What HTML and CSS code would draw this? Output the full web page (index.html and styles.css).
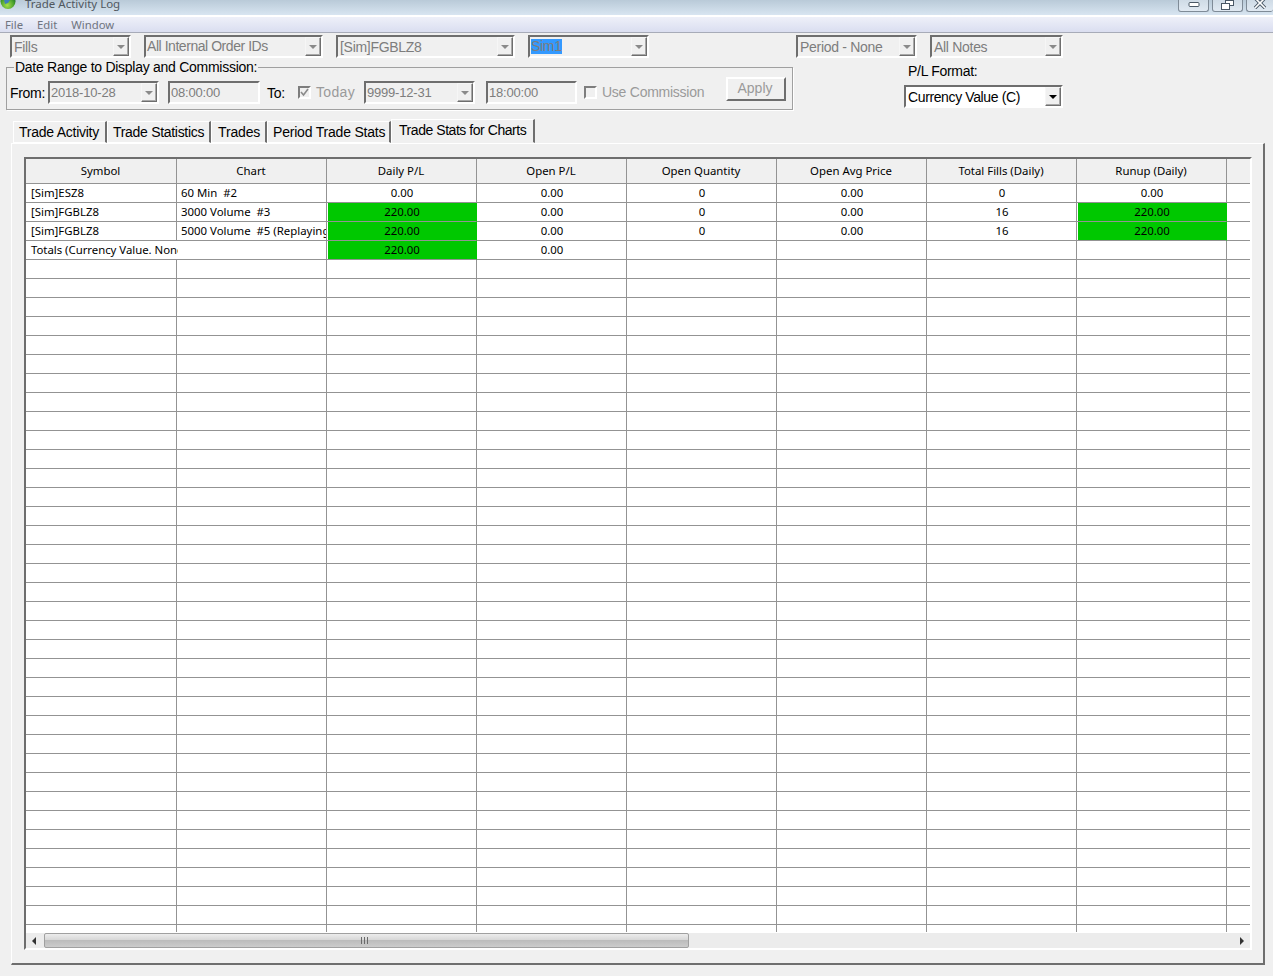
FILE: index.html
```html
<!DOCTYPE html>
<html lang="en">
<head>
<meta charset="utf-8">
<title>Trade Activity Log</title>
<link rel="stylesheet" href="styles.css">
</head>
<body>
<div class="window">
  <header class="titlebar">
    <svg class="globe" width="16" height="12" viewBox="0 0 16 12"><defs><radialGradient id="g" cx="0.45" cy="0.75" r="0.7"><stop offset="0" stop-color="#a6e04a"/><stop offset="0.7" stop-color="#3f9a2a"/><stop offset="1" stop-color="#1d5a3a"/></radialGradient></defs><circle cx="8" cy="1.5" r="7.5" fill="url(#g)"/><path d="M4 0h6l-2 3-3 1z" fill="#3f7fb8"/></svg>
    <span class="title">Trade Activity Log</span>
    <div class="winbtns">
      <div class="winbtn min"><svg width="12" height="6" viewBox="0 0 12 6"><rect x="1" y="0.5" width="10" height="4" rx="1" fill="#fff" stroke="#4a5866"/></svg></div>
      <div class="winbtn res"><svg width="13" height="10" viewBox="0 0 13 10"><rect x="4.5" y="0.5" width="8" height="5" fill="#fff" stroke="#4a5866"/><rect x="0.5" y="3.5" width="8" height="6" fill="#fff" stroke="#4a5866"/></svg></div>
      <div class="winbtn cls"><svg width="14" height="9" viewBox="0 0 14 9"><path d="M2 -2l5 5 5-5M2 8l5-5 5 5" fill="none" stroke="#4a5866" stroke-width="3.4"/><path d="M2 -2l5 5 5-5M2 8l5-5 5 5" fill="none" stroke="#fff" stroke-width="1.6"/></svg></div>
    </div>
  </header>
  <nav class="menubar"><span>File</span><span>Edit</span><span>Window</span></nav>

  <main class="client">
    <div class="toolbar">
      <div class="combo w121"><span class="val">Fills</span><span class="drop"></span></div>
      <div class="combo w179"><span class="val nudge">All Internal Order IDs</span><span class="drop"></span></div>
      <div class="combo w179"><span class="val">[Sim]FGBLZ8</span><span class="drop"></span></div>
      <div class="combo w121"><span class="val nudge"><span class="sel">Sim1</span></span><span class="drop"></span></div>
      <div class="combo w121 far"><span class="val">Period - None</span><span class="drop"></span></div>
      <div class="combo w133"><span class="val">All Notes</span><span class="drop"></span></div>
    </div>

    <div class="second">
      <div class="range">
        <span class="legend">Date Range to Display and Commission:</span>
        <span class="lbl from">From:</span>
        <div class="combo w111 date"><span class="val">2018-10-28</span><span class="drop"></span></div>
        <div class="field date"><span class="val">08:00:00</span></div>
        <span class="lbl to">To:</span>
        <span class="check"><svg width="9" height="9" viewBox="0 0 9 9"><path d="M1 4l2.5 3L8 1" fill="none" stroke="#8a8a8a" stroke-width="1.6"/></svg></span>
        <span class="dis today">Today</span>
        <div class="combo w111 date after-today"><span class="val">9999-12-31</span><span class="drop"></span></div>
        <div class="field date second-time"><span class="val">18:00:00</span></div>
        <span class="check after-time"></span>
        <span class="dis usec">Use Commission</span>
        <button class="apply" disabled>Apply</button>
      </div>
      <div class="plbox">
        <div class="pltitle">P/L Format:</div>
        <div class="combo w159 on"><span class="val">Currency Value (C)</span><span class="drop"></span></div>
      </div>
    </div>

    <div class="tabs">
      <div class="tab t1">Trade Activity</div>
      <div class="tab t2">Trade Statistics</div>
      <div class="tab t3">Trades</div>
      <div class="tab t4">Period Trade Stats</div>
      <div class="tab active">Trade Stats for Charts</div>
    </div>

    <section class="panel">
      <div class="grid">
        <div class="gridbody">
          <div class="row head">
            <div class="c">Symbol</div><div class="c">Chart</div><div class="c">Daily P/L</div><div class="c">Open P/L</div><div class="c">Open Quantity</div><div class="c">Open Avg Price</div><div class="c">Total Fills (Daily)</div><div class="c">Runup (Daily)</div><div class="c end"></div>
          </div>
          <div class="row">
            <div class="c l">[Sim]ESZ8</div><div class="c l pre">60 Min  #2</div><div class="c n">0.00</div><div class="c n">0.00</div><div class="c n">0</div><div class="c n">0.00</div><div class="c n">0</div><div class="c n">0.00</div><div class="c end"></div>
          </div>
          <div class="row">
            <div class="c l">[Sim]FGBLZ8</div><div class="c l pre">3000 Volume  #3</div><div class="c n up"><span>220.00</span></div><div class="c n">0.00</div><div class="c n">0</div><div class="c n">0.00</div><div class="c n">16</div><div class="c n up"><span>220.00</span></div><div class="c end"></div>
          </div>
          <div class="row">
            <div class="c l">[Sim]FGBLZ8</div><div class="c l pre">5000 Volume  #5 (Replaying)</div><div class="c n up"><span>220.00</span></div><div class="c n">0.00</div><div class="c n">0</div><div class="c n">0.00</div><div class="c n">16</div><div class="c n up"><span>220.00</span></div><div class="c end"></div>
          </div>
          <div class="row">
            <div class="c l spill">Totals (Currency Value. None)</div><div class="c l"></div><div class="c n up"><span>220.00</span></div><div class="c n">0.00</div><div class="c"></div><div class="c"></div><div class="c"></div><div class="c"></div><div class="c end"></div>
          </div>
          <div class="filler"></div>
        </div>
        <div class="hscroll">
          <div class="sbtn"><span class="arr-l"></span></div>
          <div class="thumb"><span class="grip"></span></div>
          <div class="track"></div>
          <div class="sbtn right"><span class="arr-r"></span></div>
        </div>
      </div>
    </section>
  </main>
</div>
</body>
</html>
```
FILE: styles.css
```css
* { box-sizing: border-box; }
html, body { margin: 0; padding: 0; }
body { width: 1273px; height: 976px; overflow: hidden; background: #f0f0f0; font-family: "Liberation Sans", Arial, sans-serif; font-size: 14px; letter-spacing: -.3px; color: #000; }
.window { width: 1273px; height: 976px; display: flex; flex-direction: column; background: #f0f0f0; overflow: hidden; }

.titlebar { height: 15px; flex: none; display: flex; align-items: flex-start; background: linear-gradient(#b9cad8, #d8e5f1); position: relative; letter-spacing: 0; }
.globe { flex: none; }
.title { margin-left: 9px; margin-top: -4px; font-size: 11.5px; line-height: 15px; color: #50585f; font-family: "Noto Sans", sans-serif; }
.winbtns { margin-left: auto; display: flex; gap: 3px; }
.winbtn { height: 12px; border: 1px solid #7f8b97; border-top: 0; border-radius: 0 0 3px 3px; background: linear-gradient(#cfdbe6, #e0e9f2); display: flex; align-items: flex-start; justify-content: center; padding-top: 2px; }
.min { width: 31px; }
.res { width: 31px; padding-top: 0; }
.cls { width: 27px; border-right: 0; padding-top: 0; }

.menubar { height: 18px; flex: none; border-top: 2px solid #fff; border-bottom: 1px solid #a7abb8; background: linear-gradient(#eef0f9, #dadef0); display: flex; padding-left: 5px; gap: 14px; font-family: "Noto Sans", sans-serif; font-size: 11.3px; letter-spacing: 0; line-height: 15px; color: #6f7480; }

.client { flex: 1; display: flex; flex-direction: column; }
.toolbar { display: flex; gap: 13px; padding: 2px 0 0 10px; height: 25px; }
.second { display: flex; padding-left: 6px; height: 60px; }

.combo { height: 23px; flex: none; display: flex; border: 2px solid; border-color: #6e6e6e #fff #fff #6e6e6e; background: #f0f0f0; color: #7d7d7d; line-height: 21px; }
.val { flex: 1; padding-left: 2px; white-space: nowrap; overflow: hidden; min-width: 0; }
.nudge { margin-top: -1px; padding-left: 1px; letter-spacing: -.45px; }
.sel { background: #3399ff; display: inline-block; line-height: 15px; height: 15px; margin-top: 3px; vertical-align: top; letter-spacing: -.3px; }
.drop { width: 16px; height: 19px; flex: none; position: relative; background: #f0f0f0; border: 1px solid; border-color: #f6f6f6 #6e6e6e #6e6e6e #f6f6f6; box-shadow: inset -1px -1px 0 #a8a8a8; }
.drop::after { content: ""; position: absolute; left: 3px; top: 7px; border: 4px solid transparent; border-top: 4px solid #8a8a8a; border-bottom: 0; }
.on { background: #fff; color: #000; letter-spacing: -.38px; }
.on .drop::after { border-top-color: #000; }
.date { font-size: 13px; letter-spacing: -.2px; line-height: 20px; }
.date .val { padding-left: 1px; }

.w111 { width: 111px; } .w121 { width: 121px; } .w133 { width: 133px; } .w159 { width: 159px; } .w179 { width: 179px; }
.far { margin-left: 134px; }

.range { width: 787px; height: 43px; margin-top: 9px; padding: 13px 0 0 3px; border: 1px solid #a0a0a0; box-shadow: 1px 1px 0 #fff; display: flex; align-items: flex-start; position: relative; flex: none; }
.legend { position: absolute; left: 7px; top: -8px; padding: 0 1px; line-height: 15px; background: #f0f0f0; white-space: nowrap; letter-spacing: -.27px; }
.lbl { line-height: 23px; height: 23px; }
.from { width: 38px; padding-top: 1px; }
.field { height: 23px; width: 92px; margin-left: 9px; flex: none; display: flex; border: 2px solid; border-color: #6e6e6e #fff #fff #6e6e6e; color: #7d7d7d; line-height: 19px; }
.to { margin-left: 7px; width: 31px; padding-top: 1px; }
.check { width: 13px; height: 13px; margin-top: 5px; flex: none; border: 2px solid; border-color: #7d7d7d #fff #fff #7d7d7d; display: flex; align-items: center; justify-content: center; background: #f0f0f0; }
.check svg { flex: none; }
.dis { color: #9a9a9a; line-height: 23px; height: 23px; white-space: nowrap; }
.today { margin-left: 5px; width: 48px; letter-spacing: .35px; }
.usec { margin-left: 5px; letter-spacing: -.25px; }
.after-today { margin-left: 0; }
.second-time { margin-left: 11px; width: 91px; }
.after-time { margin-left: 7px; }
.apply { position: absolute; left: 719px; top: 9px; width: 60px; height: 24px; padding: 0 2px 3px 0; font: 14px "Liberation Sans", Arial, sans-serif; color: #9a9a9a; background: #f0f0f0; border: 2px solid; border-color: #fff #6e6e6e #6e6e6e #fff; }

.plbox { margin-left: 111px; display: flex; flex-direction: column; }
.pltitle { margin: 5px 0 0 4px; line-height: 17px; height: 22px; }

.tabs { display: flex; height: 26px; padding-left: 13px; align-items: flex-end; margin-top: -1px; position: relative; z-index: 1; }
.tab { height: 22px; border: 1px solid; border-color: #fff #6e6e6e #fff #fff; border-right-width: 2px; line-height: 21px; padding-left: 5px; white-space: nowrap; flex: none; }
.t1 { width: 94px; letter-spacing: -.25px; } .t2 { width: 104px; } .t3 { width: 56px; padding-left: 6px; letter-spacing: -.15px; } .t4 { width: 124px; padding-left: 5px; letter-spacing: -.2px; }
.active { height: 24px; width: 144px; padding-left: 7px; line-height: 20px; border-bottom-color: #f0f0f0; background: #f0f0f0; letter-spacing: -.45px; }

.panel { margin-left: 11px; height: 822px; width: 1254px; flex: none; border: 1px solid; border-color: #fff #6e6e6e #6e6e6e #fff; border-right-width: 2px; border-bottom-width: 2px; padding: 13px 13px 0 12px; }
.grid { width: 1228px; height: 793px; border: 2px solid; border-color: #6e6e6e #fff #fff #6e6e6e; display: flex; flex-direction: column; background: #fff; overflow: hidden; }
.gridbody { flex: none; height: 773px; display: flex; flex-direction: column; overflow: hidden; }
.row { display: grid; grid-template-columns: 151px repeat(7, 150px) 1fr; height: 19px; flex: none; font: 11.4px/17px "Noto Sans", sans-serif; letter-spacing: 0; color: #000; }
.head { height: 25px; background: #f0f0f0; line-height: 23px; }
.head .c { padding-right: 1px; }
.c { border-right: 1px solid #939393; border-bottom: 1px solid #939393; text-align: center; white-space: nowrap; overflow: hidden; min-width: 0; }
.end { border-right: 0; }
.l { text-align: left; padding-left: 4px; }
.row .l:first-child { padding-left: 5px; }
.pre { white-space: pre; }
.n { padding-left: 1px; }
.up { position: relative; padding-left: 0; overflow: visible; border-right-color: #00c800; }
.up span { display: block; height: 18px; background: #00c800; margin-left: 1px; }
.row .spill { overflow: visible; position: relative; width: 152px; border-right: 0; clip-path: inset(0 0 0 0); letter-spacing: -.03px; }
.filler { flex: 1; background:
  repeating-linear-gradient(to bottom, transparent 0 18px, #939393 18px 19px),
  repeating-linear-gradient(to right, transparent 0 149px, #939393 149px 150px);
  background-size: 100% 100%, 1200px 100%;
  background-position: 0 0, 1px 0;
  background-repeat: no-repeat; }
.hscroll { flex: none; height: 15px; display: flex; background: #ececec; margin-top: 1px; }
.sbtn { width: 18px; flex: none; position: relative; }
.arr-l, .arr-r { position: absolute; top: 4px; border: 4px solid transparent; }
.arr-l { left: 6px; border-right-color: #333; border-left: 0; }
.arr-r { left: 8px; border-left-color: #333; border-right: 0; }
.thumb { width: 645px; flex: none; position: relative; border: 1px solid #a0a0a0; border-radius: 2px; background: linear-gradient(#ececec, #d8d8d8 45%, #bcbcbc 50%, #cccccc); }
.grip { position: absolute; left: 316px; top: 3px; width: 8px; height: 7px; background: repeating-linear-gradient(to right, #6a6a6a 0 1px, transparent 1px 3px); }
.track { flex: 1; }
```
